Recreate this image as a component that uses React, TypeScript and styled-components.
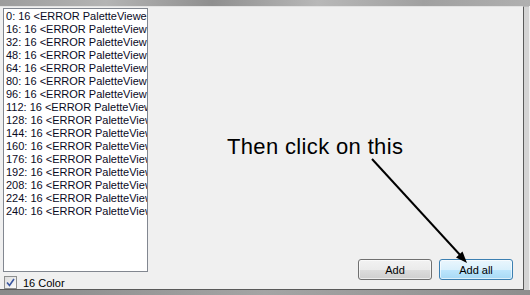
import React from 'react';
import styled, { createGlobalStyle } from 'styled-components';

const GlobalStyle = createGlobalStyle`
  html, body {
    margin: 0;
    padding: 0;
    background: #f0f0f0;
  }
`;

const Screen = styled.div`
  position: relative;
  width: 530px;
  height: 295px;
  display: flex;
  flex-direction: column;
  overflow: hidden;
  font-family: "Liberation Sans", Arial, sans-serif;
`;

const TopStrip = styled.div`
  height: 6px;
  background: linear-gradient(90deg, #9c9c9c 0%, #b4b4b4 20%, #8f8f8f 40%, #b8b8b8 60%, #a0a0a0 80%, #b0b0b0 100%);
`;

const Middle = styled.div`
  display: flex;
  height: 284px;
`;

const RightEdge = styled.div`
  width: 5px;
  background: #d4d4d4;
  border-top: 1px solid #bcbcbc;
`;

const BottomStrip = styled.div`
  height: 5px;
  background: linear-gradient(90deg, #8a8a8a, #a4a4a4 50%, #8e8e8e);
`;

const Window = styled.div`
  width: 524px;
  box-sizing: border-box;
  background: #f0f0f0;
  border-top: 1px solid #e2e2e2;
  border-right: 1px solid #5a5a5a;
  border-bottom: 1px solid #5a5a5a;
  display: grid;
  grid-template-columns: 148px 1fr;
  grid-template-rows: 265px 1fr;
  padding: 1px 0 0 3px;
`;

const ListBox = styled.div`
  box-sizing: border-box;
  width: 145px;
  height: 264px;
  background: #fff;
  border: 1px solid #828790;
  padding: 1px 0 0 1px;
  overflow: hidden;
`;

const ListItem = styled.div`
  height: 13px;
  line-height: 13px;
  font-size: 11px;
  color: #0a0a1e;
  white-space: nowrap;
  padding-left: 1px;
`;

const CheckRow = styled.div`
  display: flex;
  align-items: center;
  gap: 6px;
  margin-top: 3px;
  margin-left: 1px;
  font-size: 11px;
  color: #000;
`;

const CheckBox = styled.div`
  box-sizing: border-box;
  width: 13px;
  height: 13px;
  border: 1px solid #8e8f8f;
  background: linear-gradient(135deg, #dcdcdc, #fbfbfb);
  display: flex;
  align-items: center;
  justify-content: center;
`;

const ButtonArea = styled.div`
  grid-column: 2;
  grid-row: 1 / 3;
  display: flex;
  justify-content: flex-end;
  align-items: flex-end;
  gap: 7px;
  padding: 0 10px 9px 0;
`;

const Button = styled.div<{ $hot?: boolean }>`
  box-sizing: border-box;
  width: 74px;
  height: 21px;
  border-radius: 3px;
  border: 1px solid ${({ $hot }) => ($hot ? '#3c7fb1' : '#707070')};
  background: ${({ $hot }) =>
    $hot
      ? 'linear-gradient(180deg, #eaf6fd 0%, #d9f0fc 50%, #bee6fd 51%, #a7d9f5 100%)'
      : 'linear-gradient(180deg, #f2f2f2 0%, #ebebeb 50%, #dddddd 51%, #cfcfcf 100%)'};
  box-shadow: inset 0 0 0 1px rgba(255, 255, 255, 0.6);
  font-size: 11px;
  color: #000;
  display: flex;
  align-items: center;
  justify-content: center;
`;

const Note = styled.div`
  position: absolute;
  left: 227px;
  top: 136px;
  font-size: 22px;
  line-height: 22px;
  letter-spacing: 0.35px;
  color: #000;
  white-space: nowrap;
`;

const ArrowSvg = styled.svg`
  position: absolute;
  left: 0;
  top: 0;
  pointer-events: none;
`;

const rows = [0, 16, 32, 48, 64, 80, 96, 112, 128, 144, 160, 176, 192, 208, 224, 240];

export default function App() {
  return (
    <Screen>
      <GlobalStyle />
      <TopStrip />
      <Middle>
        <Window>
          <ListBox>
            {rows.map((n) => (
              <ListItem key={n}>{n}: 16 &lt;ERROR PaletteViewer&gt;</ListItem>
            ))}
          </ListBox>
          <ButtonArea>
            <Button>Add</Button>
            <Button $hot>Add all</Button>
          </ButtonArea>
          <CheckRow>
            <CheckBox>
              <svg width="9" height="9" viewBox="0 0 9 9">
                <path d="M1 4.5 L3.5 7.5 L8 1" fill="none" stroke="#3a56a0" strokeWidth="1.6" />
              </svg>
            </CheckBox>
            16 Color
          </CheckRow>
        </Window>
        <RightEdge />
      </Middle>
      <BottomStrip />
      <Note>Then click on this</Note>
      <ArrowSvg width="530" height="295" viewBox="0 0 530 295">
        <line x1="372" y1="159" x2="461" y2="256" stroke="#000" strokeWidth="2" />
        <polygon points="467,263 456,257.5 462.5,251.5" fill="#000" />
      </ArrowSvg>
    </Screen>
  );
}
